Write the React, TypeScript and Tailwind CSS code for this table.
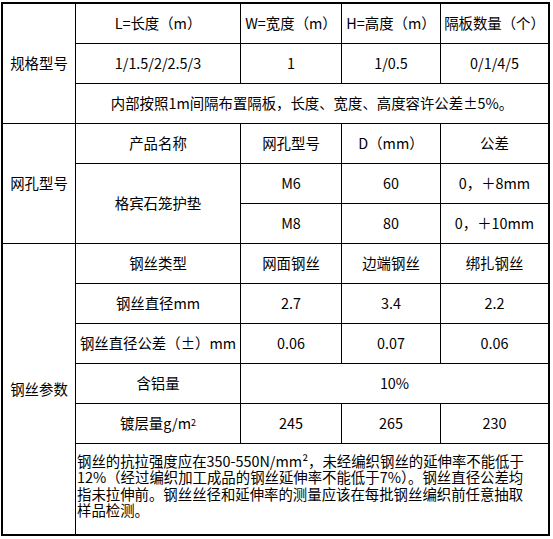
import React from "react";

const C = ({
  children,
  className = "",
}: {
  children?: React.ReactNode;
  className?: string;
}) => (
  <div
    className={
      "flex items-center justify-center whitespace-nowrap text-center border-black " +
      className
    }
  >
    {children}
  </div>
);

export default function App() {
  return (
    <div className="bg-white w-[553px] h-[539px] pt-[2px] pl-[1px]">
      <div
        className="grid w-[549px] h-[534px] border-2 border-black text-black text-[14.4px] leading-none font-['Noto_Sans_CJK_SC','Noto_Sans',sans-serif] grid-cols-[73px_165px_101px_99px_107px] grid-rows-[repeat(11,40px)_90px]"
      >
        {/* Section 1 */}
        <C className="row-span-3 border-r border-b">规格型号</C>
        <C className="border-r border-b">L=长度（m）</C>
        <C className="border-r border-b">W=宽度（m）</C>
        <C className="border-r border-b">H=高度（m）</C>
        <C className="border-b">隔板数量（个）</C>

        <C className="border-r border-b">1/1.5/2/2.5/3</C>
        <C className="border-r border-b">1</C>
        <C className="border-r border-b">1/0.5</C>
        <C className="border-b">0/1/4/5</C>

        <C className="col-span-4 border-b">
          内部按照1m间隔布置隔板，长度、宽度、高度容许公差±5%。
        </C>

        {/* Section 2 */}
        <C className="row-span-3 border-r border-b">网孔型号</C>
        <C className="border-r border-b">产品名称</C>
        <C className="border-r border-b">网孔型号</C>
        <C className="border-r border-b">D（mm）</C>
        <C className="border-b">公差</C>

        <C className="row-span-2 border-r border-b">格宾石笼护垫</C>
        <C className="border-r border-b">M6</C>
        <C className="border-r border-b">60</C>
        <C className="border-b">0，＋8mm</C>

        <C className="border-r border-b">M8</C>
        <C className="border-r border-b">80</C>
        <C className="border-b">0，＋10mm</C>

        {/* Section 3 */}
        <C className="row-span-6 border-r">钢丝参数</C>
        <C className="border-r border-b">钢丝类型</C>
        <C className="border-r border-b">网面钢丝</C>
        <C className="border-r border-b">边端钢丝</C>
        <C className="border-b">绑扎钢丝</C>

        <C className="border-r border-b">钢丝直径mm</C>
        <C className="border-r border-b">2.7</C>
        <C className="border-r border-b">3.4</C>
        <C className="border-b">2.2</C>

        <C className="border-r border-b">钢丝直径公差（±）mm</C>
        <C className="border-r border-b">0.06</C>
        <C className="border-r border-b">0.07</C>
        <C className="border-b">0.06</C>

        <C className="border-r border-b">含铝量</C>
        <C className="col-span-3 border-b">10%</C>

        <C className="border-r border-b">
          镀层量g/m<sup className="text-[9px] relative -top-[1px]">2</sup>
        </C>
        <C className="border-r border-b">245</C>
        <C className="border-r border-b">265</C>
        <C className="border-b">230</C>

        <div className="col-span-4 pt-[9px] pl-[1px] whitespace-nowrap text-left leading-[16.3px]">
          <div>钢丝的抗拉强度应在350-550N/mm²，未经编织钢丝的延伸率不能低于</div>
          <div>12%（经过编织加工成品的钢丝延伸率不能低于7%）。钢丝直径公差均</div>
          <div>指未拉伸前。钢丝丝径和延伸率的测量应该在每批钢丝编织前任意抽取</div>
          <div>样品检测。</div>
        </div>
      </div>
    </div>
  );
}
